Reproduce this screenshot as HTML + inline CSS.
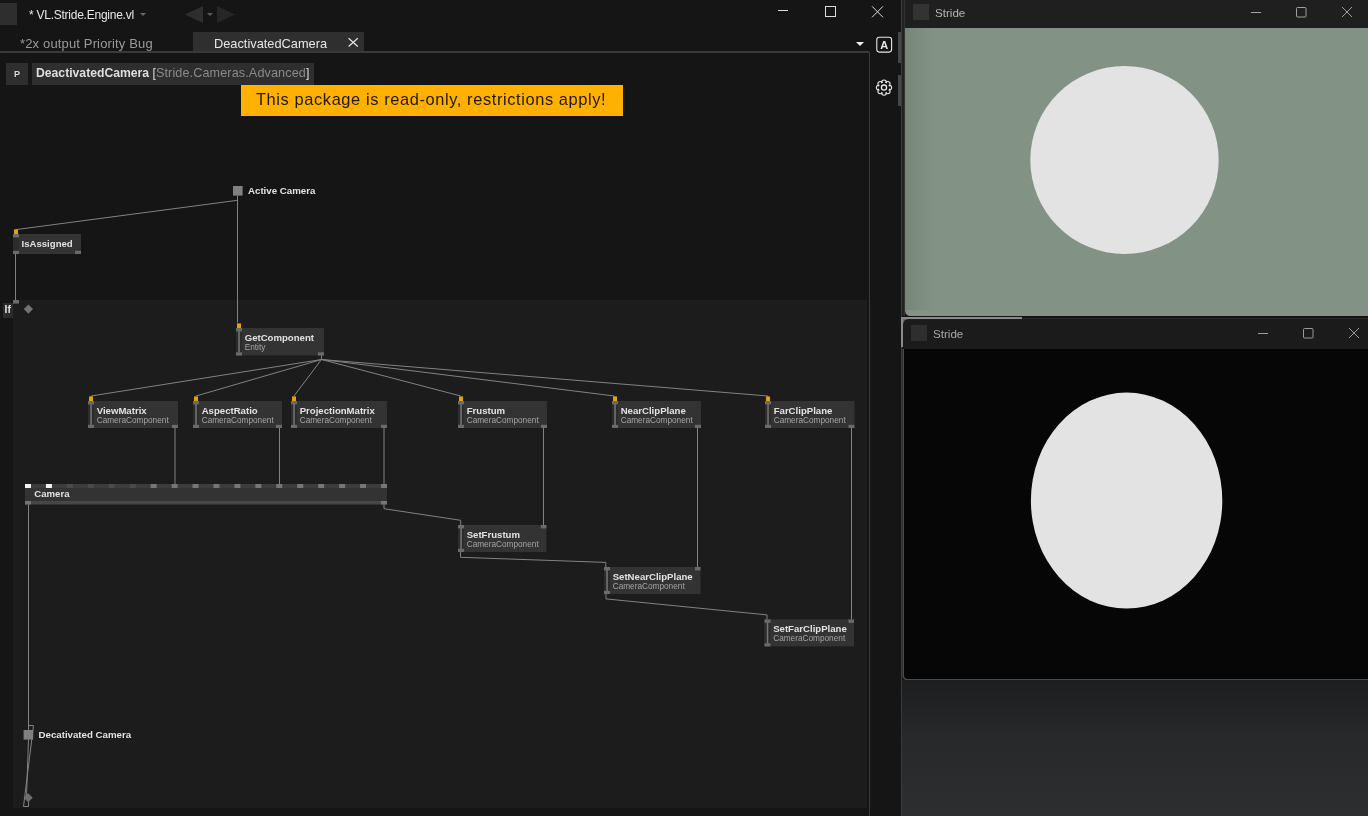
<!DOCTYPE html><html><head><meta charset="utf-8"><style>
html,body{margin:0;padding:0;background:#151515;overflow:hidden;width:1368px;height:816px}
svg{display:block;will-change:transform}
text{font-family:"Liberation Sans", sans-serif}
.b{font-weight:bold}
</style></head><body>
<svg width="1368" height="816" viewBox="0 0 1368 816">
<defs>
<linearGradient id="gl" x1="0" y1="0" x2="1" y2="0">
<stop offset="0" stop-color="#00140a" stop-opacity="0.10"/><stop offset="1" stop-color="#00140a" stop-opacity="0"/>
</linearGradient>
<linearGradient id="desk" x1="0" y1="0" x2="0" y2="1">
<stop offset="0" stop-color="#1d1e20"/><stop offset="0.45" stop-color="#28292b"/><stop offset="1" stop-color="#2d2e30"/>
</linearGradient>
</defs>

<rect x="0" y="0" width="901" height="816" fill="#151515"/>
<rect x="0" y="3" width="17" height="22" fill="#2e2e2e"/>
<text x="29" y="19.3" font-size="12" fill="#e6e6e6" letter-spacing="-0.25">* VL.Stride.Engine.vl</text>
<polygon points="140,13 146,13 143,16" fill="#6a6a6a"/>
<polygon points="185,14.5 203,6 203,23" fill="#2e2e2e"/>
<polygon points="207,13 213,13 210,16" fill="#5a5a5a"/>
<polygon points="217,6 235,14.5 217,23" fill="#262626"/>
<g stroke="#dcdcdc" stroke-width="1" fill="none">
<line x1="778" y1="10.5" x2="788" y2="10.5"/>
<rect x="825.5" y="6.5" width="10" height="10"/>
<line x1="872" y1="6.3" x2="883" y2="17.3"/><line x1="883" y1="6.3" x2="872" y2="17.3"/>
</g>
<text x="20" y="47.7" font-size="13" fill="#9a9a9a" letter-spacing="0.15">*2x output Priority Bug</text>
<rect x="193" y="32" width="171" height="19" fill="#2f2f2f"/>
<text x="214" y="47.7" font-size="12.8" fill="#e6e6e6">DeactivatedCamera</text>
<g stroke="#e0e0e0" stroke-width="1.3"><line x1="348.6" y1="38.3" x2="357.8" y2="46.5"/><line x1="357.8" y1="38.3" x2="348.6" y2="46.5"/></g>
<polygon points="856,42 864,42 860,46" fill="#eeeeee"/>
<rect x="0" y="51" width="869" height="2" fill="#3a3a3a"/>
<rect x="869" y="52" width="1" height="764" fill="#3a3a3a"/>
<rect x="876.8" y="37.3" width="14.8" height="14.8" rx="2.5" fill="none" stroke="#e8e8e8" stroke-width="1.1"/>
<text x="884.2" y="49" font-size="11" class="b" fill="#e8e8e8" text-anchor="middle">A</text>
<g fill="none" stroke="#e8e8e8" stroke-width="1.1"><circle cx="889.20" cy="87.60" r="2.4"/><circle cx="887.68" cy="91.28" r="2.4"/><circle cx="884.00" cy="92.80" r="2.4"/><circle cx="880.32" cy="91.28" r="2.4"/><circle cx="878.80" cy="87.60" r="2.4"/><circle cx="880.32" cy="83.92" r="2.4"/><circle cx="884.00" cy="82.40" r="2.4"/><circle cx="887.68" cy="83.92" r="2.4"/></g>
<circle cx="884" cy="87.6" r="5.2" fill="#151515"/>
<circle cx="884" cy="87.6" r="2.6" fill="none" stroke="#e8e8e8" stroke-width="1.3"/>
<rect x="898" y="32" width="3" height="31" fill="#474747"/>
<rect x="898" y="75" width="3" height="31" fill="#474747"/>
<rect x="6" y="63" width="22" height="22" fill="#2e2e2e"/>
<text x="17" y="76.5" font-size="9" class="b" fill="#d8d8d8" text-anchor="middle">P</text>
<rect x="32" y="63" width="282" height="22" fill="#2e2e2e"/>
<text x="36" y="77.3" font-size="12.2" class="b" fill="#dedede">DeactivatedCamera <tspan font-weight="normal" fill="#dedede">[</tspan><tspan font-weight="normal" fill="#8a8a8a" font-size="12.6" letter-spacing="0.13">Stride.Cameras.Advanced</tspan><tspan font-weight="normal" fill="#dedede">]</tspan></text>
<rect x="241" y="85" width="382" height="31" fill="#ffb000"/>
<text x="256" y="105" font-size="16.4" fill="#221a00" letter-spacing="0.61">This package is read-only, restrictions apply!</text>
<rect x="13" y="300" width="854" height="508" fill="#1c1c1c"/>
<rect x="3" y="303" width="10" height="15" fill="#2b2b2b"/>
<rect x="13" y="300" width="6" height="3.6" fill="#6b6b6b"/>
<text x="4.6" y="313.4" font-size="10.4" class="b" fill="#e0e0e0">If</text>
<g fill="none" stroke="#828282" stroke-width="1"><path d="M237.5,195.5 V200.3 L16,229.6"/><path d="M237.5,195.5 V322.5"/><path d="M15.5,254 V300"/><path d="M321.5,355 V359.5 L91,396"/><path d="M321.5,355 V359.5 L196,396"/><path d="M321.5,355 V359.5 L294,396"/><path d="M321.5,355 V359.5 L460.7,396"/><path d="M321.5,355 V359.5 L614.4,396"/><path d="M321.5,355 V359.5 L768,396"/><path d="M175,428 V484"/><path d="M279.5,428 V484"/><path d="M384,428 V484"/><path d="M543.5,428 V525"/><path d="M697.5,428 V567"/><path d="M851.5,428 V619"/><path d="M384,504 V508.7 L460.7,520.3 V525"/><path d="M460.5,552 V557.3 L605.8,562.4 V567"/><path d="M606,594 V598.9 L767,614.9 V619.4"/><path d="M28.5,504 V730"/><path d="M28.5,725.5 H33.5 L23.5,806.5 H28.5 V801"/><path d="M28.5,739.5 L26.5,797"/></g>
<rect x="233" y="186" width="9.6" height="9.6" fill="#808080"/>
<text x="248" y="194.3" font-size="9.7" class="b" fill="#e2e2e2">Active Camera</text>
<rect x="23.6" y="730" width="9.6" height="9.6" fill="#808080"/>
<text x="38.5" y="738.3" font-size="9.7" class="b" fill="#e2e2e2">Decativated Camera</text>
<polygon points="28.4,304.5 33,309.1 28.4,313.7 23.8,309.1" fill="#727272"/>
<polygon points="28.2,793.2 32.7,797.7 28.2,802.2 23.7,797.7" fill="#6e6e6e"/>
<rect x="13" y="234" width="68" height="20" fill="#333333"/><rect x="13" y="234" width="6" height="20" fill="#2c2c2c"/><rect x="14" y="229.4" width="4" height="4.6" fill="#e5a00c"/><rect x="13" y="234" width="6" height="3.4" fill="#6b6b6b"/><rect x="13" y="250.8" width="6" height="3.2" fill="#6b6b6b"/><rect x="75" y="250.8" width="6" height="3.2" fill="#6b6b6b"/><text x="21.5" y="246.8" font-size="9.6" class="b" fill="#e2e2e2">IsAssigned</text>
<rect x="236" y="328" width="88" height="27.5" fill="#333333"/><rect x="236" y="328" width="6" height="27.5" fill="#2c2c2c"/><rect x="237" y="323.4" width="4" height="4.6" fill="#e5a00c"/><rect x="238.3" y="331" width="1.5" height="21.5" fill="#767676"/><rect x="236" y="328" width="6" height="3.4" fill="#6b6b6b"/><rect x="236" y="352.3" width="6" height="3.2" fill="#6b6b6b"/><rect x="318" y="352.3" width="6" height="3.2" fill="#6b6b6b"/><text x="244.7" y="340.6" font-size="9.6" class="b" fill="#e2e2e2">GetComponent</text><text x="244.7" y="350" font-size="8.25" fill="#a4a4a4">Entity</text>
<rect x="88" y="401" width="90" height="27" fill="#333333"/><rect x="88" y="401" width="6" height="27" fill="#2c2c2c"/><rect x="89" y="396.4" width="4" height="4.6" fill="#e5a00c"/><rect x="90.3" y="404" width="1.5" height="21" fill="#767676"/><rect x="88" y="401" width="6" height="3.4" fill="#6b6b6b"/><rect x="88" y="424.8" width="6" height="3.2" fill="#6b6b6b"/><rect x="172" y="424.8" width="6" height="3.2" fill="#6b6b6b"/><text x="96.7" y="413.6" font-size="9.6" class="b" fill="#e2e2e2">ViewMatrix</text><text x="96.7" y="423" font-size="8.25" fill="#a4a4a4">CameraComponent</text>
<rect x="193" y="401" width="89" height="27" fill="#333333"/><rect x="193" y="401" width="6" height="27" fill="#2c2c2c"/><rect x="194" y="396.4" width="4" height="4.6" fill="#e5a00c"/><rect x="195.3" y="404" width="1.5" height="21" fill="#767676"/><rect x="193" y="401" width="6" height="3.4" fill="#6b6b6b"/><rect x="193" y="424.8" width="6" height="3.2" fill="#6b6b6b"/><rect x="276" y="424.8" width="6" height="3.2" fill="#6b6b6b"/><text x="201.7" y="413.6" font-size="9.6" class="b" fill="#e2e2e2">AspectRatio</text><text x="201.7" y="423" font-size="8.25" fill="#a4a4a4">CameraComponent</text>
<rect x="291" y="401" width="96" height="27" fill="#333333"/><rect x="291" y="401" width="6" height="27" fill="#2c2c2c"/><rect x="292" y="396.4" width="4" height="4.6" fill="#e5a00c"/><rect x="293.3" y="404" width="1.5" height="21" fill="#767676"/><rect x="291" y="401" width="6" height="3.4" fill="#6b6b6b"/><rect x="291" y="424.8" width="6" height="3.2" fill="#6b6b6b"/><rect x="381" y="424.8" width="6" height="3.2" fill="#6b6b6b"/><text x="299.7" y="413.6" font-size="9.6" class="b" fill="#e2e2e2">ProjectionMatrix</text><text x="299.7" y="423" font-size="8.25" fill="#a4a4a4">CameraComponent</text>
<rect x="458" y="401" width="89" height="27" fill="#333333"/><rect x="458" y="401" width="6" height="27" fill="#2c2c2c"/><rect x="459" y="396.4" width="4" height="4.6" fill="#e5a00c"/><rect x="460.3" y="404" width="1.5" height="21" fill="#767676"/><rect x="458" y="401" width="6" height="3.4" fill="#6b6b6b"/><rect x="458" y="424.8" width="6" height="3.2" fill="#6b6b6b"/><rect x="541" y="424.8" width="6" height="3.2" fill="#6b6b6b"/><text x="466.7" y="413.6" font-size="9.6" class="b" fill="#e2e2e2">Frustum</text><text x="466.7" y="423" font-size="8.25" fill="#a4a4a4">CameraComponent</text>
<rect x="612" y="401" width="89" height="27" fill="#333333"/><rect x="612" y="401" width="6" height="27" fill="#2c2c2c"/><rect x="613" y="396.4" width="4" height="4.6" fill="#e5a00c"/><rect x="614.3" y="404" width="1.5" height="21" fill="#767676"/><rect x="612" y="401" width="6" height="3.4" fill="#6b6b6b"/><rect x="612" y="424.8" width="6" height="3.2" fill="#6b6b6b"/><rect x="695" y="424.8" width="6" height="3.2" fill="#6b6b6b"/><text x="620.7" y="413.6" font-size="9.6" class="b" fill="#e2e2e2">NearClipPlane</text><text x="620.7" y="423" font-size="8.25" fill="#a4a4a4">CameraComponent</text>
<rect x="765" y="401" width="89.5" height="27" fill="#333333"/><rect x="765" y="401" width="6" height="27" fill="#2c2c2c"/><rect x="766" y="396.4" width="4" height="4.6" fill="#e5a00c"/><rect x="767.3" y="404" width="1.5" height="21" fill="#767676"/><rect x="765" y="401" width="6" height="3.4" fill="#6b6b6b"/><rect x="765" y="424.8" width="6" height="3.2" fill="#6b6b6b"/><rect x="848.5" y="424.8" width="6" height="3.2" fill="#6b6b6b"/><text x="773.7" y="413.6" font-size="9.6" class="b" fill="#e2e2e2">FarClipPlane</text><text x="773.7" y="423" font-size="8.25" fill="#a4a4a4">CameraComponent</text>
<rect x="458" y="525" width="88.4" height="27" fill="#333333"/><rect x="458" y="525" width="6" height="27" fill="#2c2c2c"/><rect x="460.3" y="528" width="1.5" height="21" fill="#767676"/><rect x="458" y="525" width="6" height="3.4" fill="#6b6b6b"/><rect x="458" y="548.8" width="6" height="3.2" fill="#6b6b6b"/><rect x="540.9" y="525" width="5.5" height="3.4" fill="#6b6b6b"/><text x="466.7" y="537.6" font-size="9.6" class="b" fill="#e2e2e2">SetFrustum</text><text x="466.7" y="547" font-size="8.25" fill="#a4a4a4">CameraComponent</text>
<rect x="604" y="567" width="96.5" height="27" fill="#333333"/><rect x="604" y="567" width="6" height="27" fill="#2c2c2c"/><rect x="606.3" y="570" width="1.5" height="21" fill="#767676"/><rect x="604" y="567" width="6" height="3.4" fill="#6b6b6b"/><rect x="604" y="590.8" width="6" height="3.2" fill="#6b6b6b"/><rect x="695.0" y="567" width="5.5" height="3.4" fill="#6b6b6b"/><text x="612.7" y="579.6" font-size="9.6" class="b" fill="#e2e2e2">SetNearClipPlane</text><text x="612.7" y="589" font-size="8.25" fill="#a4a4a4">CameraComponent</text>
<rect x="764.5" y="619.4" width="89.5" height="27" fill="#333333"/><rect x="764.5" y="619.4" width="6" height="27" fill="#2c2c2c"/><rect x="766.8" y="622.4" width="1.5" height="21" fill="#767676"/><rect x="764.5" y="619.4" width="6" height="3.4" fill="#6b6b6b"/><rect x="764.5" y="643.1999999999999" width="6" height="3.2" fill="#6b6b6b"/><rect x="848.5" y="619.4" width="5.5" height="3.4" fill="#6b6b6b"/><text x="773.2" y="632.0" font-size="9.6" class="b" fill="#e2e2e2">SetFarClipPlane</text><text x="773.2" y="641.4" font-size="8.25" fill="#a4a4a4">CameraComponent</text>
<rect x="25" y="484" width="362" height="4" fill="#3c3c3c"/>
<rect x="25" y="488" width="362" height="13" fill="#333333"/>
<rect x="25" y="501" width="362" height="3.5" fill="#474747"/>
<rect x="25.00" y="484" width="6" height="4" fill="#f2f2f2"/>
<rect x="45.94" y="484" width="6" height="4" fill="#f2f2f2"/>
<rect x="66.88" y="484" width="6" height="4" fill="#4a4a4a"/>
<rect x="87.82" y="484" width="6" height="4" fill="#4a4a4a"/>
<rect x="108.76" y="484" width="6" height="4" fill="#4a4a4a"/>
<rect x="129.71" y="484" width="6" height="4" fill="#4a4a4a"/>
<rect x="150.65" y="484" width="6" height="4" fill="#767676"/>
<rect x="171.59" y="484" width="6" height="4" fill="#767676"/>
<rect x="192.53" y="484" width="6" height="4" fill="#767676"/>
<rect x="213.47" y="484" width="6" height="4" fill="#767676"/>
<rect x="234.41" y="484" width="6" height="4" fill="#767676"/>
<rect x="255.35" y="484" width="6" height="4" fill="#767676"/>
<rect x="276.29" y="484" width="6" height="4" fill="#767676"/>
<rect x="297.24" y="484" width="6" height="4" fill="#767676"/>
<rect x="318.18" y="484" width="6" height="4" fill="#767676"/>
<rect x="339.12" y="484" width="6" height="4" fill="#767676"/>
<rect x="360.06" y="484" width="6" height="4" fill="#767676"/>
<rect x="381.00" y="484" width="6" height="4" fill="#767676"/>
<rect x="25" y="501" width="6" height="3.5" fill="#767676"/>
<rect x="381" y="501" width="6" height="3.5" fill="#767676"/>
<text x="34.3" y="497" font-size="9.6" class="b" fill="#e2e2e2">Camera</text>
<rect x="901" y="0" width="1" height="816" fill="#3a3a3a"/>
<rect x="902" y="0" width="2" height="317" fill="#222222"/>
<rect x="904" y="0" width="1" height="317" fill="#333333"/>
<rect x="905" y="0" width="463" height="28" fill="#1f1f1f"/>
<rect x="913" y="4" width="16" height="16" fill="#333333"/>
<text x="935" y="17" font-size="11.6" fill="#b4b4b4">Stride</text>
<g stroke="#a0a0a0" stroke-width="1" fill="none">
<line x1="1251" y1="12.5" x2="1261" y2="12.5"/>
<rect x="1296.5" y="7.5" width="9.5" height="9.5" rx="1"/>
<line x1="1342" y1="7" x2="1352" y2="17"/><line x1="1352" y1="7" x2="1342" y2="17"/>
</g>
<path d="M905,28 H1368 V316 H911 Q905,316 905,310 Z" fill="#829385"/>
<rect x="905" y="28" width="28" height="282" fill="url(#gl)"/>
<ellipse cx="1124.5" cy="160" rx="94.2" ry="94" fill="#e3e3e3"/>
<rect x="902" y="316" width="466" height="3" fill="#141414"/>
<rect x="901" y="317" width="121" height="2" fill="#8a8a8a"/>
<rect x="901" y="317" width="2" height="30" fill="#8a8a8a"/>
<rect x="903" y="319" width="8" height="8" fill="#6a6a6a"/>
<path d="M903,349 V325 Q903,319 909,319 H1368 V349 Z" fill="#1b1b1b"/>
<rect x="1022" y="318" width="346" height="1" fill="#2c2c2c"/>
<rect x="911" y="325" width="16" height="16" fill="#2e2e2e"/>
<text x="933" y="338" font-size="11.6" fill="#a8a8a8">Stride</text>
<g stroke="#9a9a9a" stroke-width="1" fill="none">
<line x1="1258" y1="333.5" x2="1268" y2="333.5"/>
<rect x="1303.5" y="328.5" width="9.5" height="9.5" rx="1"/>
<line x1="1349" y1="328" x2="1359" y2="338"/><line x1="1359" y1="328" x2="1349" y2="338"/>
</g>
<path d="M902.5,349 H1368 V680.3 H908 Q902.5,680.3 902.5,675 Z" fill="#4a4a4a"/>
<path d="M904,349 H1368 V679 H908 Q904,679 904,675 Z" fill="#060606"/>
<ellipse cx="1126.6" cy="500.6" rx="95.7" ry="108" fill="#e3e3e3"/>
<rect x="902" y="680" width="466" height="136" fill="url(#desk)"/>
</svg></body></html>
